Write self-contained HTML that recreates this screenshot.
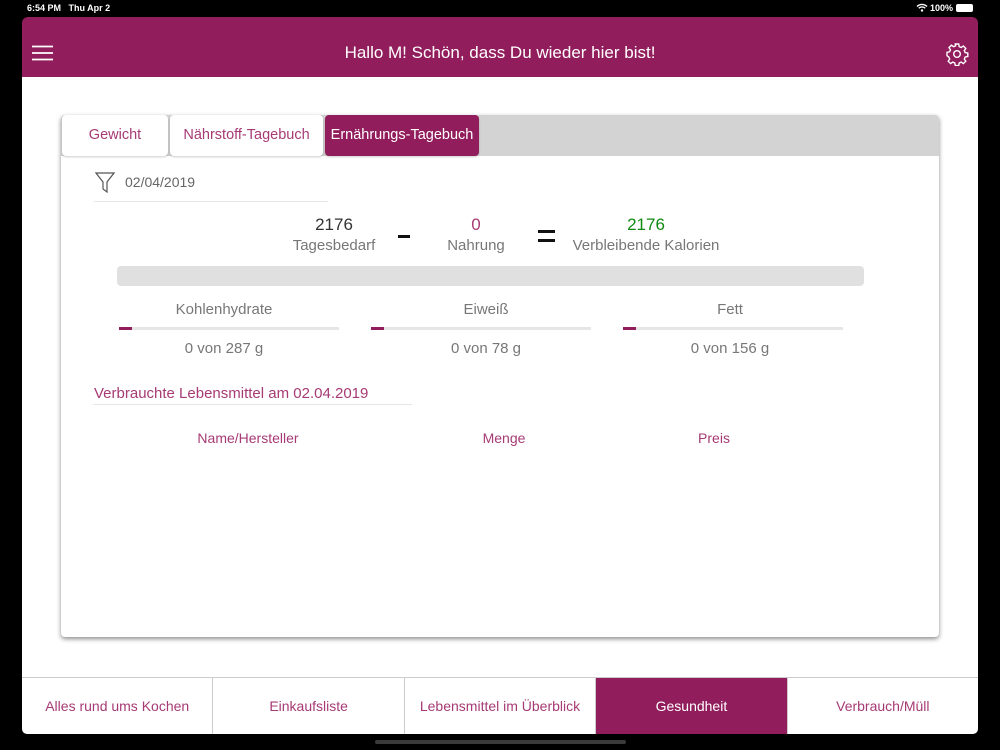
<!DOCTYPE html>
<html><head><meta charset="utf-8"><style>
*{margin:0;padding:0;box-sizing:border-box}
body{width:1000px;height:750px;background:#000;position:relative;overflow:hidden;font-family:"Liberation Sans",sans-serif}
.a{position:absolute}
.st{color:#fff;font-size:9px;font-weight:bold;top:3px}
.hdr{left:22px;top:17px;width:956px;height:60px;background:#921d5c;border-radius:6px 6px 0 0}
.cont{left:22px;top:77px;width:956px;height:600px;background:#fff}
.card{left:61px;top:115px;width:878px;height:522px;background:#fff;border-radius:4px;box-shadow:0 2px 5px rgba(0,0,0,.45);overflow:hidden}
.strip{left:0;top:0;width:878px;height:41px;background:#d3d3d3}
.tab{top:0;height:41px;background:#fff;border-radius:4px;color:#a63a74;font-size:14.5px;line-height:41px;text-align:center;box-shadow:0 1px 2px rgba(0,0,0,.2);white-space:nowrap}
.c{text-align:center}
.g{color:#777;font-size:15px}
.bar{height:3px;background:#e6e6e6;width:220px}
.bar i{display:block;width:13px;height:3px;background:#921d5c}
.pk{color:#a63a74;font-size:15px}
.tb{left:22px;top:677px;width:956px;height:57px;background:#fff;border-top:1px solid #ccc;border-radius:0 0 5px 5px;overflow:hidden;display:flex}
.tb div{flex:1;border-left:1px solid #ccc;color:#a63a74;font-size:14px;text-align:center;line-height:56px}
.tb div:first-child{border-left:none}
</style></head><body>
<div class="a st" style="left:27px">6:54 PM&nbsp;&nbsp;&nbsp;Thu Apr 2</div>
<div class="a st" style="left:930px">100%</div>
<svg class="a" style="left:916px;top:3px" width="12" height="9" viewBox="0 0 12 9"><path d="M1 3.5a7 7 0 0 1 10 0M2.8 5.3a4.5 4.5 0 0 1 6.4 0" stroke="#fff" stroke-width="1.4" fill="none"/><circle cx="6" cy="7.5" r="1.2" fill="#fff"/></svg>
<div class="a" style="left:956px;top:4px;width:17px;height:8px;background:#fff;border-radius:2px"></div>
<div class="a hdr"></div>
<svg class="a" style="left:32px;top:45px" width="22" height="16"><path d="M0 1.5h21M0 8h21M0 14.5h21" stroke="#fff" stroke-width="1.8"/></svg>
<div class="a" style="left:0;width:1000px;top:43px;text-align:center;color:#fff;font-size:17px">Hallo M! Schön, dass Du wieder hier bist!</div>
<svg class="a" style="left:945px;top:42px" width="24" height="24" viewBox="0 0 24 24" fill="none" stroke="#fff" stroke-width="1.4"><circle cx="12" cy="12" r="3.3"/><path d="M10.3 2h3.4l.5 2.6 2 .9 2.2-1.5 2.4 2.4-1.5 2.2.9 2 2.6.5v3.4l-2.6.5-.9 2 1.5 2.2-2.4 2.4-2.2-1.5-2 .9-.5 2.6h-3.4l-.5-2.6-2-.9-2.2 1.5-2.4-2.4 1.5-2.2-.9-2L2 13.7v-3.4l2.6-.5.9-2L4 5.6 6.4 3.2l2.2 1.5 2-.9z"/></svg>
<div class="a cont"></div>
<div class="a card">
<div class="a strip"></div>
<div class="a tab" style="left:1px;width:106px">Gewicht</div>
<div class="a tab" style="left:109px;width:153px">Nährstoff-Tagebuch</div>
<div class="a tab" style="left:264px;width:154px;background:#921d5c;color:#fff">Ernährungs-Tagebuch</div>
</div>
<svg class="a" style="left:95px;top:172px" width="20" height="21" viewBox="0 0 20 21"><path d="M1 1h18l-7 9v10l-4-3v-7z" fill="none" stroke="#555" stroke-width="1.2"/></svg>
<div class="a" style="left:125px;top:174px;color:#666;font-size:14px">02/04/2019</div>
<div class="a" style="left:94px;top:201px;width:234px;height:1px;background:#e6e6e6"></div>
<div class="a c" style="left:294px;top:215px;width:80px;color:#333;font-size:17px">2176</div>
<div class="a c g" style="left:284px;top:237px;width:100px">Tagesbedarf</div>
<div class="a" style="left:398px;top:235px;width:12px;height:3px;background:#111"></div>
<div class="a c" style="left:436px;top:215px;width:80px;color:#a63a74;font-size:17px">0</div>
<div class="a c g" style="left:426px;top:237px;width:100px">Nahrung</div>
<div class="a" style="left:538px;top:230px;width:17px;height:3px;background:#111"></div>
<div class="a" style="left:538px;top:239px;width:17px;height:3px;background:#111"></div>
<div class="a c" style="left:596px;top:215px;width:100px;color:#128a12;font-size:17px">2176</div>
<div class="a c g" style="left:566px;top:237px;width:160px">Verbleibende Kalorien</div>
<div class="a" style="left:117px;top:266px;width:747px;height:20px;background:#e0e0e0;border-radius:4px"></div>
<div class="a c g" style="left:114px;top:301px;width:220px">Kohlenhydrate</div>
<div class="a c g" style="left:376px;top:301px;width:220px">Eiweiß</div>
<div class="a c g" style="left:620px;top:301px;width:220px">Fett</div>
<div class="a bar" style="left:119px;top:327px"><i></i></div>
<div class="a bar" style="left:371px;top:327px"><i></i></div>
<div class="a bar" style="left:623px;top:327px"><i></i></div>
<div class="a c g" style="left:114px;top:340px;width:220px">0 von 287 g</div>
<div class="a c g" style="left:376px;top:340px;width:220px">0 von 78 g</div>
<div class="a c g" style="left:620px;top:340px;width:220px">0 von 156 g</div>
<div class="a pk" style="left:94px;top:385px">Verbrauchte Lebensmittel am 02.04.2019</div>
<div class="a" style="left:93px;top:404px;width:319px;height:1px;background:#e6e6e6"></div>
<div class="a c pk" style="left:168px;top:430px;width:160px;font-size:14px">Name/Hersteller</div>
<div class="a c pk" style="left:454px;top:430px;width:100px;font-size:14px">Menge</div>
<div class="a c pk" style="left:664px;top:430px;width:100px;font-size:14px">Preis</div>
<div class="a tb"><div>Alles rund ums Kochen</div><div>Einkaufsliste</div><div>Lebensmittel im Überblick</div><div style="background:#921d5c;color:#fff">Gesundheit</div><div>Verbrauch/Müll</div></div>
<div class="a" style="left:375px;top:740px;width:251px;height:4px;background:#3a3a3a;border-radius:2px"></div>
</body></html>
